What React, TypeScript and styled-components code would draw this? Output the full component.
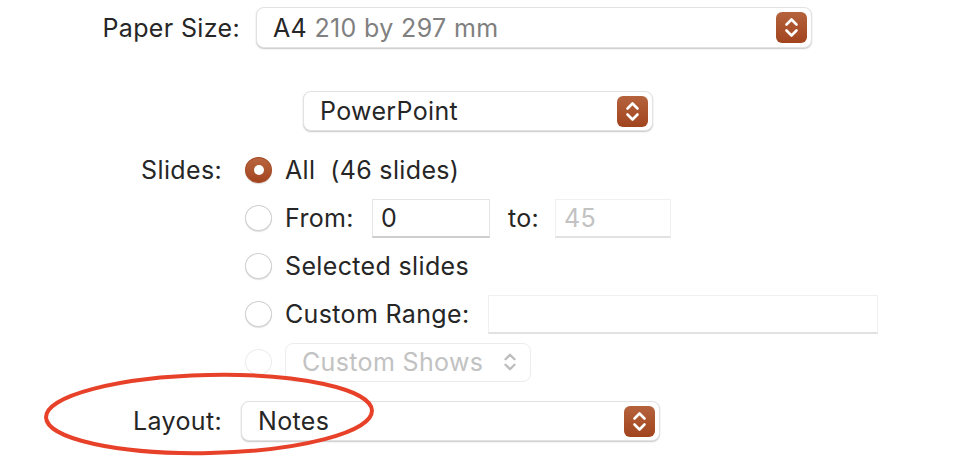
import styled, { createGlobalStyle } from 'styled-components'

const Global = createGlobalStyle`
  body {
    margin: 0;
    background: #fff;
    font-family: Inter, "Liberation Sans", sans-serif;
    color: #262626;
  }
`

const Page = styled.div`
  position: relative;
  width: 956px;
  height: 458px;
  overflow: hidden;
  padding-top: 7px;
  box-sizing: border-box;
`

const Row = styled.div<{ $labelWidth: number; $gap: number; $height?: number }>`
  display: flex;
  align-items: center;
  gap: ${({ $gap }) => $gap}px;
  height: ${({ $height }) => $height ?? 48}px;
  & > .label {
    width: ${({ $labelWidth }) => $labelWidth}px;
    text-align: right;
    flex-shrink: 0;
  }
`

const Label = styled.span.attrs({ className: 'label' })`
  font-size: 25px;
  letter-spacing: 0.35px;
  color: #262626;
`

const Text = styled.span<{ $muted?: boolean; $disabled?: boolean }>`
  font-size: 25px;
  letter-spacing: 0.35px;
  white-space: pre;
  color: ${({ $muted, $disabled }) => ($disabled ? '#c2c2c2' : $muted ? '#808080' : '#262626')};
`

const Select = styled.div<{ $width: number; $height?: number; $disabled?: boolean }>`
  box-sizing: border-box;
  width: ${({ $width }) => $width}px;
  height: ${({ $height }) => $height ?? 40}px;
  display: flex;
  align-items: center;
  justify-content: space-between;
  padding: 0 4px 0 16px;
  background: #fff;
  border-radius: 8px;
  border: 1px solid ${({ $disabled }) => ($disabled ? '#ececec' : '#e2e2e2')};
  box-shadow: ${({ $disabled }) => ($disabled ? 'none' : '0 1px 1.5px rgba(0,0,0,0.22)')};
`

const StepButton = styled.span`
  width: 31px;
  height: 31px;
  border-radius: 6px;
  background: linear-gradient(#b5633d, #a1441e);
  display: flex;
  align-items: center;
  justify-content: center;
`

const Chevrons = ({ color, size = 31 }: { color: string; size?: number }) => (
  <svg width={size} height={size} viewBox="0 0 31 31" fill="none">
    <path d="M10.5 12.5 L15.5 7.5 L20.5 12.5" stroke={color} strokeWidth="2.6" strokeLinecap="round" strokeLinejoin="round" />
    <path d="M10.5 18.5 L15.5 23.5 L20.5 18.5" stroke={color} strokeWidth="2.6" strokeLinecap="round" strokeLinejoin="round" />
  </svg>
)

const Radio = styled.span<{ $checked?: boolean; $disabled?: boolean }>`
  box-sizing: border-box;
  width: 27px;
  height: 26px;
  border-radius: 50%;
  flex-shrink: 0;
  display: flex;
  align-items: center;
  justify-content: center;
  background: ${({ $checked }) => ($checked ? 'linear-gradient(#b8653f, #a3451f)' : '#fff')};
  border: 1px solid ${({ $checked, $disabled }) => ($checked ? '#a3451f' : $disabled ? '#ececec' : '#cfcfcf')};
  box-shadow: ${({ $disabled, $checked }) =>
    $disabled ? 'none' : $checked ? '0 1px 1px rgba(0,0,0,0.15)' : '0 1px 1px rgba(0,0,0,0.12)'};
  &::after {
    content: '';
    display: ${({ $checked }) => ($checked ? 'block' : 'none')};
    width: 10px;
    height: 10px;
    border-radius: 50%;
    background: #fff;
  }
`

const Option = styled.div`
  display: flex;
  align-items: center;
  gap: 13px;
`

const Field = styled.div<{ $width: number; $disabled?: boolean }>`
  box-sizing: border-box;
  width: ${({ $width }) => $width}px;
  height: 39px;
  padding: 0 8px;
  display: flex;
  align-items: center;
  background: #fff;
  border: 1px solid ${({ $disabled }) => ($disabled ? '#f0f0f0' : '#e4e4e4')};
  border-bottom: 2px solid ${({ $disabled }) => ($disabled ? '#e2e2e2' : '#cdcdcd')};
`

const Slides = styled.div`
  margin-top: 15px;
`

const Spacer = styled.div<{ $h: number }>`
  height: ${({ $h }) => $h}px;
`

const Ellipse = styled.svg`
  position: absolute;
  left: 42px;
  top: 371px;
`

export default function App() {
  return (
    <Page>
      <Global />
      <Row $labelWidth={240} $gap={16} $height={41}>
        <Label>Paper Size:</Label>
        <Select $width={556} $height={41}>
          <span>
            <Text>A4 </Text>
            <Text $muted>210 by 297 mm</Text>
          </span>
          <StepButton>
            <Chevrons color="#fff" />
          </StepButton>
        </Select>
      </Row>

      <Spacer $h={43} />
      <Row $labelWidth={284} $gap={19} $height={40}>
        <span className="label" />
        <Select $width={350}>
          <Text>PowerPoint</Text>
          <StepButton>
            <Chevrons color="#fff" />
          </StepButton>
        </Select>
      </Row>

      <Slides>
        <Row $labelWidth={222} $gap={23}>
          <Label>Slides:</Label>
          <Option>
            <Radio $checked />
            <Text>All  (46 slides)</Text>
          </Option>
        </Row>
        <Row $labelWidth={222} $gap={23}>
          <span className="label" />
          <Option>
            <Radio />
            <Text>From:</Text>
            <Field $width={118} style={{ marginLeft: 5 }}>
              <Text>0</Text>
            </Field>
            <Text style={{ marginLeft: 5 }}>to:</Text>
            <Field $width={116} $disabled style={{ marginLeft: 3 }}>
              <Text $disabled>45</Text>
            </Field>
          </Option>
        </Row>
        <Row $labelWidth={222} $gap={23}>
          <span className="label" />
          <Option>
            <Radio />
            <Text>Selected slides</Text>
          </Option>
        </Row>
        <Row $labelWidth={222} $gap={23}>
          <span className="label" />
          <Option>
            <Radio />
            <Text>Custom Range:</Text>
            <Field $width={390} $disabled style={{ marginLeft: 5 }} />
          </Option>
        </Row>
        <Row $labelWidth={222} $gap={23}>
          <span className="label" />
          <Option>
            <Radio $disabled />
            <Select $width={246} $height={39} $disabled style={{ paddingRight: 6 }}>
              <Text $disabled>Custom Shows</Text>
              <Chevrons color="#bdbdbd" size={28} />
            </Select>
          </Option>
        </Row>
      </Slides>

      <Spacer $h={15} />
      <Row $labelWidth={222} $gap={19} $height={40}>
        <Label>Layout:</Label>
        <Select $width={419}>
          <Text>Notes</Text>
          <StepButton>
            <Chevrons color="#fff" />
          </StepButton>
        </Select>
      </Row>

      <Ellipse width="334" height="86" viewBox="0 0 334 86">
        <ellipse cx="167" cy="43" rx="163" ry="39" fill="none" stroke="#e8412a" strokeWidth="4" transform="rotate(-1.2 167 43)" />
      </Ellipse>
    </Page>
  )
}
